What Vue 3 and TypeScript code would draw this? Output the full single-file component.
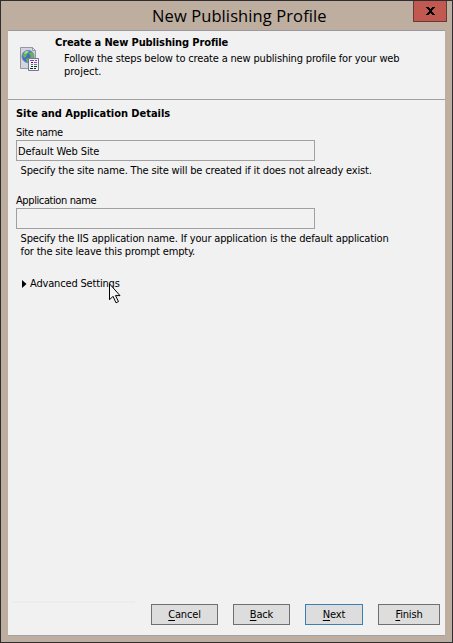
<script setup lang="ts">
interface WizardButton {
  key: string
  rest: string
  kind: string
}

const buttons: WizardButton[] = [
  { key: 'C', rest: 'ancel', kind: 'cancel' },
  { key: 'B', rest: 'ack', kind: 'back' },
  { key: 'N', rest: 'ext', kind: 'next' },
  { key: 'F', rest: 'inish', kind: 'finish' },
]
</script>

<template>
  <div class="window">
    <header class="titlebar">
      <h1 class="title">New Publishing Profile</h1>
      <button class="close" aria-label="Close">
        <svg width="9" height="8" viewBox="0 0 9 8" shape-rendering="crispEdges">
          <path d="M0 0h3v1h1v1h1v-1h1v-1h3v1h-1v1h-1v1h-1v2h1v1h1v1h1v1h-3v-1h-1v-1h-1v1h-1v1h-3v-1h1v-1h1v-1h1v-2h-1v-1h-1v-1h-1z" />
        </svg>
      </button>
    </header>
    <main class="client">
      <section class="banner">
        <svg class="icon" width="20" height="25" viewBox="0 0 20 25">
          <path d="M.5.5h12l3 3v18H.5z" fill="#d3d4df" stroke="#9697a5" />
          <path d="M12.500.5v3h3z" fill="#f7f7fb" stroke="#9697a5" />
          <circle cx="8" cy="9.500" r="6" fill="#426fc0" stroke="#6585b5" />
          <path d="M3 8l2-3 3-1 1 2-2 1-1 3-2 1zM10 5l3 1 1 4-2 2-2-1 1-2-2-2zM6 12l3-1 2 2-2 2H7z" fill="#69b653" />
          <path d="M4 6l2-2 3 0-2 2-2 1z" fill="#a8dc90" />
          <path d="M8.500 11.500h10v12h-10z" fill="#f1f1f8" stroke="#77778c" />
          <g shape-rendering="crispEdges">
            <path d="M10 13h4v1h-4zM15 13h2v1h-2z" fill="#b529cc" />
            <path d="M11 15h2v1h-2z" fill="#333" />
            <path d="M14 15h3v1h-3z" fill="#9b45cf" />
            <path d="M11 17h2v1h-2z" fill="#24924e" />
            <path d="M14 17h3v1h-3z" fill="#3e9d53" />
            <path d="M11 19h2v1h-2zM14 19h3v1h-3zM10 21h3v1h-3zM14 21h2v1h-2z" fill="#222230" />
          </g>
        </svg>
        <div class="intro">
          <h2 class="wizard-title">Create a New Publishing Profile</h2>
          <p>Follow the steps below to create a new publishing profile for your web<br /><span class="loose">project.</span></p>
        </div>
      </section>
      <section class="form">
        <h2>Site and Application Details</h2>
        <div class="field">
          <div class="label">Site name</div>
          <div class="input">Default Web Site</div>
          <p class="hint">Specify the site name. The site will be created if it does not already exist.</p>
        </div>
        <div class="field second">
          <div class="label">Application name</div>
          <div class="input"></div>
          <p class="hint">Specify the IIS application name. If your application is the default application<br />for the site leave this prompt empty.</p>
        </div>
        <div class="advanced">
          <svg width="5" height="8" viewBox="0 0 5 8"><path d="M0 0l4.500 4L0 8z" /></svg>
          <span>Advanced Settings</span>
          <svg class="cursor" width="12" height="21" viewBox="0 0 12 21">
            <path d="M.5.8v16l3.500-3.500 3 6.500 2.500-1.200-3-6H11z" fill="#f4f4f4" stroke="#000" />
          </svg>
        </div>
      </section>
      <div class="progress"></div>
      <footer class="actions">
        <button v-for="b in buttons" :key="b.kind" class="btn" :class="b.kind">
          <span class="mnemonic">{{ b.key }}</span>{{ b.rest }}
        </button>
      </footer>
    </main>
  </div>
</template>

<style>
body {
  background: #bdaea0;
}
</style>

<style scoped>
* {
  box-sizing: border-box;
}
h1,
h2,
p {
  margin: 0;
}
.window {
  width: 453px;
  height: 643px;
  border: 1px solid #302d32;
  background: #bdaea0;
  padding: 0 7px 6px;
  display: flex;
  flex-direction: column;
  overflow: hidden;
  font: 11px/13px 'DejaVu Sans Condensed', 'DejaVu Sans', sans-serif;
  font-stretch: condensed;
  letter-spacing: -0.17px;
  color: #000;
  white-space: nowrap;
}
.titlebar {
  height: 29px;
  flex: none;
  display: flex;
  justify-content: space-between;
}
.title {
  font: 16.500px/29px 'Open Sans', 'Noto Sans', sans-serif;
  padding-left: 144px;
  letter-spacing: 0.1px;
}
.close {
  width: 34px;
  height: 21px;
  margin-right: -2px;
  padding: 0 0 1px;
  border: 1px solid #633b38;
  border-top: 0;
  background: #c25950;
  display: flex;
  align-items: center;
  justify-content: center;
}
.client {
  flex: 1;
  background: #f1f1f1;
  border-top: 1px solid #9999a4;
  border-bottom: 1px solid #a1a1a1;
  display: flex;
  flex-direction: column;
}
.banner {
  height: 69px;
  flex: none;
  border-bottom: 1px solid #a0a0a0;
  display: flex;
  padding: 5px 0 0 12px;
}
.icon {
  margin: 11px 15px 0 0;
}
.intro p {
  padding: 3px 0 0 9px;
}
.loose {
  letter-spacing: 0;
}
.form {
  padding: 7px 8px 0;
}
.label {
  margin-top: 6px;
  height: 14px;
  letter-spacing: -0.4px;
}
.input {
  width: 299px;
  height: 21px;
  border: 1px solid #a0a0a0;
  padding: 4px 1px;
  letter-spacing: -0.1px;
}
.hint {
  padding: 3px 0 0 4.600px;
}
.second {
  margin-top: 17px;
}
h2 {
  font-size: 11px;
  line-height: 13px;
  font-weight: bold;
  letter-spacing: -0.04px;
}
.wizard-title {
  letter-spacing: -0.12px;
}
.advanced {
  position: relative;
  display: flex;
  align-items: center;
  gap: 3px;
  padding-left: 6px;
  margin-top: 19px;
}
.cursor {
  position: absolute;
  left: 93px;
  top: 6px;
}
.progress {
  width: 123px;
  height: 2px;
  background: #ececec;
  margin: auto 0 0 4px;
}
.actions {
  display: flex;
  justify-content: flex-end;
  gap: 15px;
  padding: 1px 5px 10px 0;
}
.btn {
  height: 21px;
  padding: 0 0 1px;
  border: 1px solid #707070;
  background: #dddddd;
  font: inherit;
  letter-spacing: -0.16px;
  color: #000;
}
.cancel {
  width: 67px;
}
.back {
  width: 57px;
}
.next {
  width: 58px;
  border-color: #3c7fb1;
}
.finish {
  width: 62px;
}
.mnemonic {
  text-decoration: underline;
  text-decoration-thickness: 1px;
  text-decoration-skip-ink: none;
  text-underline-offset: 2px;
}
</style>
